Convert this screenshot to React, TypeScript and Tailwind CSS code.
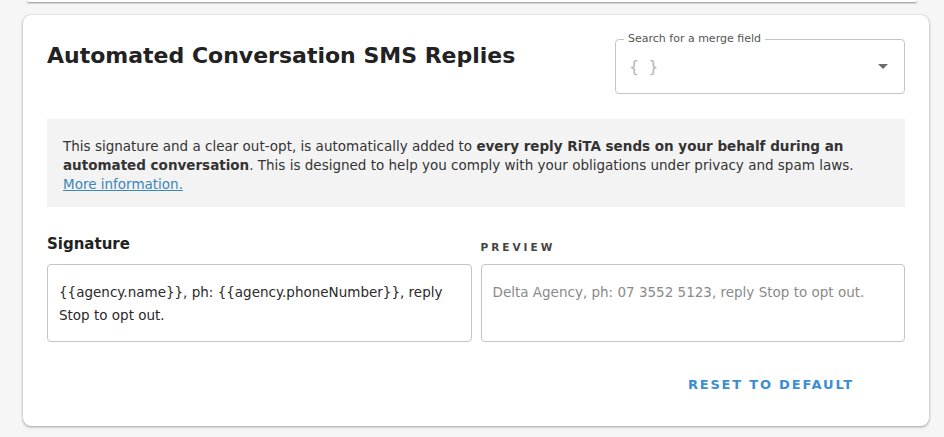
import { useState } from "react";

const font = { fontFamily: "'DejaVu Sans', 'Liberation Sans', sans-serif" };

const App = () => {
  const [signature] = useState(
    "{{agency.name}}, ph: {{agency.phoneNumber}}, reply Stop to opt out."
  );

  return (
    <div
      className="w-full min-h-[437px] bg-[#f6f6f6] px-[23px] text-[#262626]"
      style={font}
    >
      {/* card above, only its bottom edge shows */}
      <div className="h-[2px] mx-[4px] bg-white rounded-b-md shadow-[0_1px_2px_rgba(0,0,0,0.45)]"></div>

      <div className="mt-[13px] w-[906px] bg-white rounded-lg shadow-[0_1px_3px_rgba(0,0,0,0.35),0_0_1px_rgba(0,0,0,0.2)] px-[24px] pt-[25px] pb-[33px]">
        <div className="flex flex-row items-start justify-between">
          <h2 className="pt-[2px] text-[22px] leading-[28px] font-bold text-[#222]">
            Automated Conversation SMS Replies
          </h2>
          <div className="relative w-[290px] h-[55px] mt-[-1px] border border-[#c4c4c4] rounded-[4px]">
            <span className="absolute -top-[8px] left-[8px] px-[4px] bg-white text-[11px] leading-[14px] text-[#555]">
              Search for a merge field
            </span>
            <div className="flex items-center h-full pl-[13px] pr-[16px]">
              <span className="text-[16px] text-[#b5b5b5] tracking-[2px]">{"{ }"}</span>
              <svg className="ml-auto" width="10" height="5" viewBox="0 0 10 5">
                <path d="M0 0 L10 0 L5 5 Z" fill="#6b6b6b" />
              </svg>
            </div>
          </div>
        </div>

        <div className="mt-[25px] bg-[#f3f3f3] px-[16px] pt-[18px] pb-[13px] text-[13.5px] leading-[19px] text-[#333]">
          This signature and a clear out-opt, is automatically added to{" "}
          <b className="font-bold">
            every reply RiTA sends on your behalf during an
            <br />
            automated conversation
          </b>
          . This is designed to help you comply with your obligations under
          privacy and spam laws.
          <br />
          <a href="#" className="text-[#3a87b8] underline">
            More information.
          </a>
        </div>

        <div className="mt-[27px] flex flex-row gap-[9px]">
          <div className="flex-1">
            <div className="text-[15px] leading-[20px] font-bold text-[#222]">Signature</div>
            <div className="mt-[10px] h-[78px] border border-[#c4c4c4] rounded-[4px] px-[11px] pt-[16px] text-[13.5px] leading-[23px] text-[#2a2a2a]">
              {"{{agency.name}}, ph: {{agency.phoneNumber}}, reply"}
              <br />
              Stop to opt out.
            </div>
          </div>
          <div className="flex-1">
            <div className="pt-[6px] text-[10.5px] leading-[14px] font-bold tracking-[3px] text-[#444]">
              PREVIEW
            </div>
            <div className="mt-[10px] h-[78px] border border-[#c4c4c4] rounded-[4px] px-[11px] pt-[16px] text-[13.5px] leading-[23px] text-[#8a8a8a]">
              {signature
                .replace("{{agency.name}}", "Delta Agency")
                .replace("{{agency.phoneNumber}}", "07 3552 5123")}
            </div>
          </div>
        </div>

        <div className="mt-[35px] flex justify-end pr-[51px]">
          <button className="text-[13px] leading-[16px] font-bold tracking-[1.8px] text-[#3b8ed0]">
            RESET TO DEFAULT
          </button>
        </div>
      </div>
    </div>
  );
};

export default App;
